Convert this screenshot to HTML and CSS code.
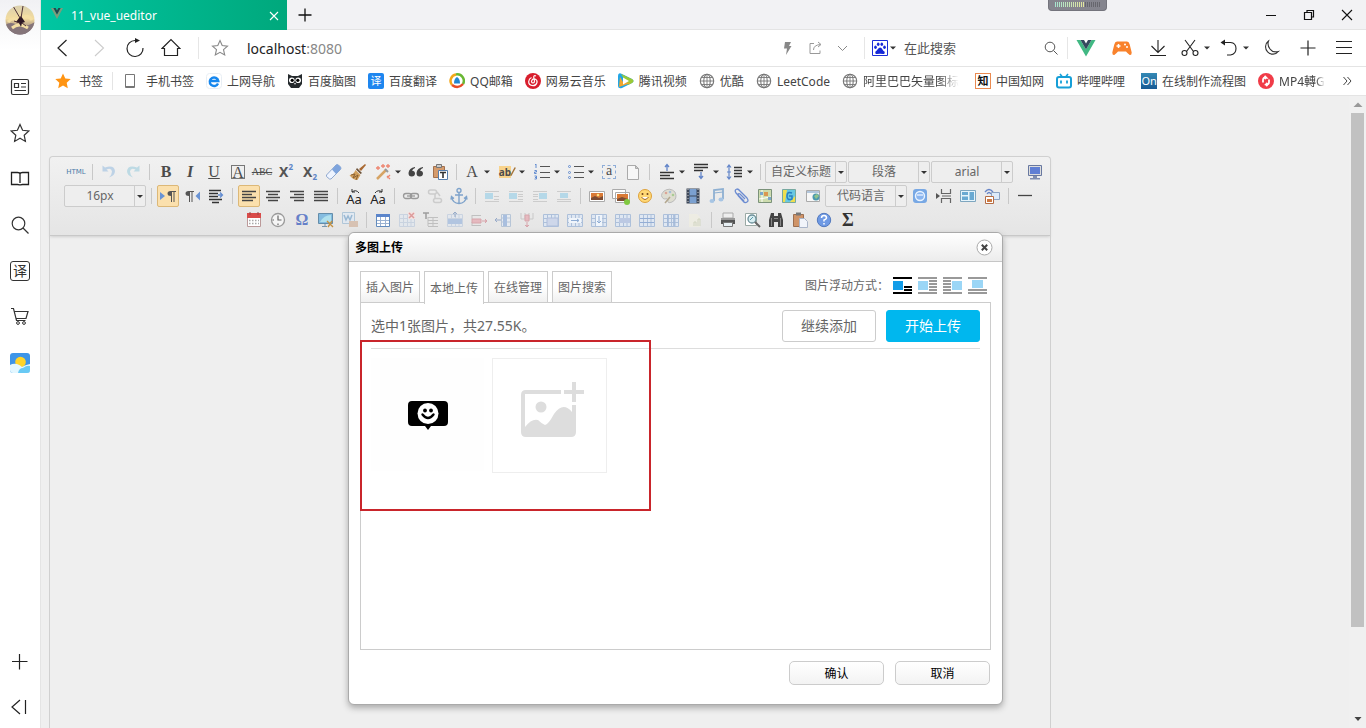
FILE: index.html
```html
<!DOCTYPE html>
<html lang="zh-CN">
<head>
<meta charset="utf-8">
<title>11_vue_ueditor</title>
<link rel="stylesheet" href="styles.css">
</head>
<body>
<svg class="defs" aria-hidden="true">
  <symbol id="caret" viewBox="0 0 6 4"><path d="M0 .5h6L3 3.500z" fill="currentColor"/></symbol>
  <symbol id="globe" viewBox="0 0 16 16"><g fill="none" stroke="#777" stroke-width="1.100"><circle cx="8" cy="8" r="6.700"/><ellipse cx="8" cy="8" rx="3.200" ry="6.700"/><path d="M1.300 8h13.400M8 1v14M2.500 4.500h11M2.500 11.500h11" stroke-width=".9"/></g></symbol>
  <symbol id="cells" viewBox="0 0 18 18"><path d="M1.500 3.500h15v12h-15z" fill="#dfe7f2"/><path d="M1.500 3.500h15v12h-15zM1.500 7.500h15M1.500 11.500h15M5.500 3.500v12M9.500 3.500v12M13 3.500v12" fill="none" stroke="#adc0da"/></symbol>
</svg>

<nav class="side" aria-label="侧边栏">
  <svg class="avatar" viewBox="0 0 30 30"><defs><clipPath id="av"><circle cx="15" cy="15" r="14.500"/></clipPath><linearGradient id="sky" x2="0" y2="1"><stop stop-color="#d9cfb0"/><stop offset=".45" stop-color="#f3dc9e"/><stop offset="1" stop-color="#66536a"/></linearGradient></defs><g clip-path="url(#av)"><path fill="url(#sky)" d="M0 0h30v30H0z"/><path d="M0 20q6-4 12 0t18-3v13H0z" fill="#85757a"/><path d="M3 17q5-6 11-1M17 13q6-4 10 2M7 23q7-6 16 0" stroke="#f4dfa4" stroke-width="3" fill="none"/><path d="M14 13l2-2 2 3 2 3-3 1-1 4-2-4-3-1z" fill="#2d1824"/><path d="M15 13L8 1m8 12 2-12M15 18l-6-2m8 2 4 3" stroke="#4c3038" fill="none"/></g></svg>
  <div class="side-list">
    <button aria-label="资讯"><svg viewBox="0 0 20 20"><g fill="none" stroke="#333" stroke-width="1.200"><rect x="1.500" y="2.500" width="17" height="15" rx="1.500"/><path d="M4.500 6.500h4v4h-4zM11 6.500h5M11 10h5M4.500 13.500H16"/></g></svg></button>
    <button aria-label="收藏"><svg viewBox="0 0 20 20"><path d="M10 1.500l2.600 5.800 6.200.7-4.600 4.200 1.200 6.200L10 15.300l-5.400 3.100 1.200-6.200L1.200 8l6.200-.7z" fill="none" stroke="#333" stroke-width="1.200"/></svg></button>
    <button aria-label="阅读"><svg viewBox="0 0 20 20"><path d="M1.500 3.500h6q2.500 0 2.500 1.500 0-1.500 2.500-1.500h6v12h-6q-2.500 0-2.500 1 0-1-2.500-1h-6zM10 5v9" fill="none" stroke="#222" stroke-width="1.300"/></svg></button>
    <button aria-label="搜索"><svg viewBox="0 0 20 20"><circle cx="8.500" cy="8.500" r="6.300" fill="none" stroke="#333" stroke-width="1.200"/><path d="M13 13l5.500 5.500" stroke="#333" stroke-width="1.200"/></svg></button>
    <button class="translate" aria-label="翻译"><span>译</span></button>
    <button aria-label="购物"><svg viewBox="0 0 20 20"><path d="M1 1.500h2.500l3 12h9M4.500 4.500H18l-2 7H6.500" fill="none" stroke="#333" stroke-width="1.200"/><circle cx="8" cy="16" r="1.400" fill="none" stroke="#333"/><circle cx="14" cy="16" r="1.400" fill="none" stroke="#333"/></svg></button>
    <button aria-label="天气"><svg viewBox="0 0 20 20"><rect width="20" height="20" rx="3" fill="#3d95e8"/><circle cx="10.500" cy="9" r="5.300" fill="#ffd429"/><path d="M0 12q3-2 7-1 3 1 5 3 3-2 8-3v6q0 3-3 3H3q-3 0-3-3z" fill="#e3f7ff"/><path d="M8 20q1-5 5-5 4-3 7-2v4q0 3-3 3z" fill="#68c9f4"/></svg></button>
  </div>
  <div class="side-end">
    <button aria-label="添加"><svg viewBox="0 0 20 20"><path d="M9.500 2v15.500M2 9.500h15.500" stroke="#222" stroke-width="1.200"/></svg></button>
    <button aria-label="收起"><svg viewBox="0 0 20 20"><path d="M10 4l-8 7 8 7M15.500 4v14" fill="none" stroke="#222" stroke-width="1.200"/></svg></button>
  </div>
</nav>

<div class="browser">
  <header class="tabstrip">
    <div class="tab"><svg class="tab-logo" viewBox="0 0 12 12"><path d="M0 0l6 11 6-11H9.600L6 6.500 2.400 0z" fill="#7d9c7c"/><path d="M2.400 0L6 6.500 9.600 0H7.400L6 2.500 4.600 0z" fill="#24434b"/></svg><span>11_vue_ueditor</span><button aria-label="关闭标签"><svg viewBox="0 0 10 10"><path d="M1 1l8 8M9 1L1 9" stroke="#fff" stroke-width="1.100"/></svg></button></div>
    <button class="new-tab" aria-label="新标签"><svg viewBox="0 0 14 14"><path d="M7 .5v13M.5 7h13" stroke="#111" stroke-width="1.300"/></svg></button>
    <div class="meter"><i></i></div>
    <div class="window-buttons">
      <button aria-label="最小化"><svg viewBox="0 0 12 12"><path d="M1 6.500h10" stroke="#111"/></svg></button>
      <button aria-label="还原"><svg viewBox="0 0 12 12"><path d="M1.500 3.500h7v7h-7zM4 3.500v-2h6.500V8h-2" fill="none" stroke="#111" stroke-width="1.200"/></svg></button>
      <button aria-label="关闭"><svg viewBox="0 0 12 12"><path d="M1 1l10 10M11 1L1 11" stroke="#111" stroke-width="1.100"/></svg></button>
    </div>
  </header>

  <div class="navbar">
    <button class="nav" aria-label="后退"><svg viewBox="0 0 20 20"><path d="M13.500 2L5 10l8.500 8" fill="none" stroke="#222" stroke-width="1.200"/></svg></button>
    <button class="nav" aria-label="前进"><svg viewBox="0 0 20 20"><path d="M6 2l8.500 8L6 18" fill="none" stroke="#ccc" stroke-width="1.100"/></svg></button>
    <button class="nav" aria-label="刷新"><svg viewBox="0 0 20 20"><path d="M11 2.500H10A8 8 0 1 0 18 10" fill="none" stroke="#222" stroke-width="1.200"/><path d="M10 0l5 2.500-5 2.500z" fill="#222"/></svg></button>
    <button class="nav" aria-label="主页"><svg viewBox="0 0 20 20"><path d="M1 10.500L10 1.500l9 9h-2.500v7h-13v-7z" fill="none" stroke="#222" stroke-width="1.200"/></svg></button>
    <i class="rule gap"></i>
    <button class="nav fav" aria-label="收藏此页"><svg viewBox="0 0 20 20"><path d="M10 2.500l2.200 5 5.300.6-4 3.600 1.200 5.300-4.700-2.700L5.300 17l1.200-5.300-4-3.600 5.300-.6z" fill="none" stroke="#888" stroke-width="1.100"/></svg></button>
    <div class="address" role="textbox" aria-label="地址" contenteditable="true">localhost<span>:8080</span></div>
    <button class="nav small" aria-label="极速"><svg viewBox="0 0 20 20"><path d="M8 4h6l-2 4h2.500L9 17l1-6.500H7z" fill="#888"/></svg></button>
    <button class="nav small" aria-label="分享"><svg viewBox="0 0 20 20"><path d="M9 5.500H5v10h10v-3M8.500 12q0-5 7-5.500M13 4l3 2.500-3 2.500" fill="none" stroke="#999"/></svg></button>
    <button class="nav small" aria-label="展开"><svg viewBox="0 0 20 20"><path d="M5 8l4.500 4.500L14 8" fill="none" stroke="#888"/></svg></button>
    <div class="search">
      <svg class="i16" viewBox="0 0 16 16"><path d="M.5.500h15v15H.5z" fill="#fff" stroke="#1c2ed8"/><g fill="#1528d8"><ellipse cx="3.500" cy="7.300" rx="1.300" ry="1.700"/><ellipse cx="6.200" cy="4.300" rx="1.300" ry="1.800"/><ellipse cx="9.800" cy="4.300" rx="1.300" ry="1.800"/><ellipse cx="12.500" cy="7.300" rx="1.300" ry="1.700"/><path d="M8 7.500q1.500 0 2.500 2t2 2q.8 2.500-1.500 2.600L8 13.800l-3 .3q-2.300-.1-1.500-2.600 1-.3 2-2T8 7.500z"/></g></svg>
      <svg class="caret" viewBox="0 0 6 4"><use href="#caret"/></svg>
      <input type="text" aria-label="搜索" placeholder="在此搜索">
      <button aria-label="搜索"><svg viewBox="0 0 14 14"><circle cx="6" cy="6" r="4.800" fill="none" stroke="#555"/><path d="M9.500 9.500L13.500 13.500" stroke="#555"/></svg></button>
    </div>
    <button class="nav" aria-label="Vue"><svg viewBox="0 0 20 20"><path d="M.5 2L10 18.500 19.500 2h-4L10 11.500 4.500 2z" fill="#41b883"/><path d="M4.500 2L10 11.500 15.500 2H12l-2 3.500L8 2z" fill="#34495e"/></svg></button>
    <button class="nav" aria-label="游戏"><svg viewBox="0 0 20 20"><path d="M5 3.500h10q2 0 2.700 3l2 8q0 3-2 2.500Q15.500 15 14 13.500H6Q4.500 15 2.300 17q-2 .5-2-2.500l2-8q.7-3 2.700-3z" fill="#f9822c"/><path d="M6.500 6v4M4.500 8h4" stroke="#fff" stroke-width="1.500"/><circle cx="13" cy="6.500" r="1" fill="#fff"/><circle cx="15" cy="9" r="1" fill="#fff"/></svg></button>
    <button class="nav" aria-label="下载"><svg viewBox="0 0 20 20"><path d="M10 2v12M3.500 8l6.500 6.500L16.500 8M2 17.500h16" fill="none" stroke="#222" stroke-width="1.100"/></svg></button>
    <button class="nav cut" aria-label="截图"><svg viewBox="0 0 20 20"><g fill="none" stroke="#222" stroke-width="1.100"><path d="M5 2l8.500 11.500M15 2L6.500 13.500"/><circle cx="4.500" cy="15" r="2.500"/><circle cx="15.500" cy="15" r="2.500"/></g></svg><svg class="caret" viewBox="0 0 6 4"><use href="#caret"/></svg></button>
    <button class="nav restore" aria-label="恢复"><svg viewBox="0 0 20 20"><path d="M3 4.500h8.500q5.500.5 5.500 6t-5.500 6.500H8" fill="none" stroke="#222" stroke-width="1.100"/><path d="M1.500 4.500L6 1.500v6z" fill="#222"/></svg><svg class="caret" viewBox="0 0 6 4"><use href="#caret"/></svg></button>
    <button class="nav" aria-label="夜间"><svg viewBox="0 0 20 20"><path d="M6.500 3a7.300 7.300 0 1 0 10 10.500Q11 15 8 11T6.500 3z" fill="none" stroke="#333" stroke-width="1.100"/></svg></button>
    <button class="nav" aria-label="更多工具"><svg viewBox="0 0 20 20"><path d="M10 2.500v15M2.500 10h15" stroke="#222" stroke-width="1.200"/></svg></button>
    <button class="nav" aria-label="菜单"><svg viewBox="0 0 20 20"><path d="M2 3.500h16M2 9.500h16M2 15.500h16" stroke="#222" stroke-width="1.100"/></svg></button>
  </div>

  <nav class="bookmarks" aria-label="书签">
    <a class="wide" href="#"><svg class="i16" viewBox="0 0 16 16"><path d="M8 .5l2.300 5 5.400.6-4 3.700 1.100 5.400L8 12.500l-4.800 2.700 1.100-5.400-4-3.700 5.400-.6z" fill="#ff9412"/></svg><span>书签</span></a>
    <a class="wide ruled" href="#"><svg class="i16" viewBox="0 0 16 16"><path d="M3.500 1.500h9v13h-9z" fill="#fff" stroke="#777"/><path d="M3.500 13.500h9" stroke="#777"/></svg><span>手机书签</span></a>
    <a href="#"><svg class="i16" viewBox="0 0 16 16"><rect x=".5" y=".5" width="15" height="15" rx="3" fill="#fff" stroke="#e8eef4"/><path d="M12 10.500A4.300 4.300 0 1 1 12.300 8H4.500" fill="none" stroke="#1687ee" stroke-width="2.400"/></svg><span>上网导航</span></a>
    <a href="#"><svg class="i16" viewBox="0 0 16 16"><path d="M1 1l4 2h6l4-2v10l-3 4H4l-3-4z" fill="#252a2d"/><circle cx="4.800" cy="7.300" r="2.800" fill="#fff"/><circle cx="11.200" cy="7.300" r="2.800" fill="#fff"/><circle cx="5.200" cy="7.300" r="1.600"/><circle cx="10.800" cy="7.300" r="1.600"/><path d="M7 10h2l-1 2z" fill="#ddd"/></svg><span>百度脑图</span></a>
    <a href="#"><b class="logo yi">译</b><span>百度翻译</span></a>
    <a href="#"><svg class="i16" viewBox="0 0 16 16"><g fill="none" stroke-width="2.500"><path d="M3 12A6.500 6.500 0 0 1 7 1.500" stroke="#f3a719"/><path d="M7 1.500A6.500 6.500 0 0 1 14 11" stroke="#69b733"/><path d="M14 11Q9 16.500 3 12" stroke="#e74c25"/></g><path d="M8 4q3 1.500 3 6.500H5Q5 5.500 8 4z" fill="#2186d0"/></svg><span>QQ邮箱</span></a>
    <a href="#"><svg class="i16" viewBox="0 0 16 16"><circle cx="8" cy="8" r="8" fill="#d81e2d"/><path d="M11 3q-2-1-2.300 1l.8 4q0 2-1.500 2-2-.2-1.300-2.300T10 6q2.500 1 2 3.500Q11 12.800 8 12.700 3.500 12.300 3.700 8.500 4 5.500 6.500 4.500" fill="none" stroke="#fff" stroke-width="1.200"/></svg><span>网易云音乐</span></a>
    <a href="#"><svg class="i16" viewBox="0 0 16 16"><path d="M0 3q0-4 4-2l10 5q3 2 0 4L4 15q-4 1-4-2z" fill="#21a6e7"/><path d="M3 1l11 5q3 2 0 4l-4 2z" fill="#9ac936"/><path d="M1 14l12-4-8-1-3-5z" fill="#f1a62c"/><path d="M5 4.500l6 3.500-6 3.500z" fill="#fff"/></svg><span>腾讯视频</span></a>
    <a href="#"><svg class="i16" viewBox="0 0 16 16"><use href="#globe"/></svg><span>优酷</span></a>
    <a href="#"><svg class="i16" viewBox="0 0 16 16"><use href="#globe"/></svg><span>LeetCode</span></a>
    <a class="roomy" href="#"><svg class="i16" viewBox="0 0 16 16"><use href="#globe"/></svg><span class="fade">阿里巴巴矢量图标</span></a>
    <a href="#"><b class="logo zhi">知</b><span>中国知网</span></a>
    <a class="roomy" href="#"><svg class="i16" viewBox="0 0 16 16"><path d="M4 1l2 2.500M12 1l-2 2.500" stroke="#169fd7" stroke-width="1.600"/><rect x="1" y="4" width="14" height="10.500" rx="2" fill="#fff" stroke="#169fd7" stroke-width="2"/><path d="M5 7.500v3M11 7.500v3" stroke="#169fd7" stroke-width="1.800"/></svg><span>哔哩哔哩</span></a>
    <a href="#"><b class="logo on">On</b><span>在线制作流程图</span></a>
    <a class="last" href="#"><svg class="i16" viewBox="0 0 16 16"><circle cx="8" cy="8" r="8" fill="#f03c48"/><path d="M5 9.500V7Q5 4 8 4.500L6.500 3M8 4.500L6.500 6M11 6.500V9q0 3-3 2.500L9.500 10M8 11.500L9.500 13" fill="none" stroke="#fff" stroke-width="1.800"/></svg><span class="fade">MP4轉G</span></a>
    <button class="more" aria-label="更多书签"><svg viewBox="0 0 10 10"><path d="M1.500 1l3.500 4-3.500 4M5.500 1L9 5 5.500 9" fill="none" stroke="#444"/></svg></button>
  </nav>

  <div class="viewport">
    <main class="page">
      <section class="editor">
        <div class="tools">
          <div class="row">
            <button class="t" aria-label="源代码"><span class="html">HTML</span></button><i class="sep"></i>
            <button class="t" aria-label="撤销"><svg viewBox="0 0 18 18"><path d="M2.500 2.500v6h6L6.500 6.500q5-2 5.500 2 0 3-3 6 6-2 6-6.500Q14 1.500 5 4.500z" fill="#bdd2e6"/></svg></button>
            <button class="t" aria-label="重做"><svg viewBox="0 0 18 18"><path d="M15.500 2.500v6h-6l2-2q-5-2-5.500 2 0 3 3 6-6-2-6-6.500Q4 1.500 13 4.500z" fill="#bddae4"/></svg></button><i class="sep"></i>
            <button class="t serif bold">B</button><button class="t serif italic">I</button><button class="t serif under">U</button>
            <button class="t serif"><span class="boxed">A</span></button><button class="t serif strike">ABC</button>
            <button class="t script">X<sup>2</sup></button><button class="t script">X<sub>2</sub></button>
            <button class="t" aria-label="清除格式"><svg viewBox="0 0 18 18"><path d="M1.500 12L11 2q1-1 2.500 0l2 2q1 1 0 2.500L6 16H4.500l-3-2.500z" fill="#eef4ff" stroke="#8fa8cf"/><path d="M7 6.500L11 2q1-1 2.500 0l2 2q1 1 0 2.500L11 11z" fill="#7ea4dd"/></svg></button>
            <button class="t" aria-label="格式刷"><svg viewBox="0 0 18 18"><path d="M16 1l1 1-5 6-2-2z" fill="#a96932"/><path d="M8 5l5 5-1.500 1L7 6.500z" fill="#6c5239"/><path d="M6.500 7l5 5-3 5q-5 0-8-5 4 0 6-5z" fill="#d1a15e"/><path d="M2 12l4-1-2 4 5-3-2 5" stroke="#8a6030" fill="none"/></svg></button>
            <button class="t split" aria-label="自动排版"><svg viewBox="0 0 18 18"><path d="M3 16L12 7" stroke="#d6a465" stroke-width="2.500"/><path d="M11 6l3 3" stroke="#999" stroke-width="2"/><path d="M4 3v4M2 5h4M9 1v4M7 3h4M14 1v4M12 3h4M13 13l3 3M16 12l-3 3" stroke="#ee8570" stroke-width="1.300"/></svg><svg class="caret" viewBox="0 0 6 4"><use href="#caret"/></svg></button>
            <button class="t" aria-label="引用"><svg viewBox="0 0 18 18"><path d="M8 4Q2 5 1.500 10q0 3.500 3.200 3.500T8 10.500Q8 8 5 7.500 6 5.500 8 5zM16 4q-6 1-6.500 6 0 3.500 3.200 3.500t3.300-3q0-2.500-3-3 1-2 3-2.500z" fill="#444"/></svg></button>
            <button class="t" aria-label="纯文本粘贴"><svg viewBox="0 0 18 18"><path d="M2.500 3.500h11v11h-11z" fill="#d59b6c" stroke="#a2714e"/><path d="M5.500 1.500h5v3h-5z" fill="#ccc" stroke="#777"/><path d="M7.500 7.500h9v9h-9z" fill="#fff" stroke="#557dac"/><path d="M9 9.500h6M12 9v6" stroke="#333" stroke-width="1.600"/></svg></button><i class="sep"></i>
            <button class="t split serif">A<svg class="caret" viewBox="0 0 6 4"><use href="#caret"/></svg></button>
            <button class="t split" aria-label="背景色"><span class="marker">ab</span><svg class="pen" viewBox="0 0 8 14"><path d="M7 1L1 12" stroke="#a67436" stroke-width="2"/></svg><svg class="caret" viewBox="0 0 6 4"><use href="#caret"/></svg></button>
            <button class="t split" aria-label="有序列表"><svg viewBox="0 0 18 18"><path d="M7 3.500h10M7 9.500h10M7 14.500h10" stroke="#555"/><path d="M2 2l1-1v4M1.500 7.500h2v1.500h-2v1.500h2M1.500 13h2v3h-2M2 14.500h1.500" fill="none" stroke="#638cd0"/></svg><svg class="caret" viewBox="0 0 6 4"><use href="#caret"/></svg></button>
            <button class="t split" aria-label="无序列表"><svg viewBox="0 0 18 18"><path d="M7 3.500h10M7 9.500h10M7 14.500h10" stroke="#555"/><g fill="none" stroke="#638cd0"><circle cx="2.500" cy="3.500" r="1"/><circle cx="2.500" cy="9.500" r="1"/><circle cx="2.500" cy="14.500" r="1"/></g></svg><svg class="caret" viewBox="0 0 6 4"><use href="#caret"/></svg></button>
            <button class="t serif"><span class="dotted">a</span></button>
            <button class="t" aria-label="清空文档"><svg viewBox="0 0 18 18"><path d="M3.500 2.500h8l3 3v11h-11z" fill="#f7f7f7" stroke="#aaa"/><path d="M11.500 2.500v3h3z" fill="#ccc" stroke="#aaa"/></svg></button><i class="sep"></i>
            <button class="t split" aria-label="段前距"><svg viewBox="0 0 18 18"><path d="M2 9.500h14M2 12.500h10M2 15.500h14" stroke="#333" stroke-width="1.400"/><path d="M9 8V2M7 4l2-2.500L11 4" fill="none" stroke="#6285c9" stroke-width="1.300"/></svg><svg class="caret" viewBox="0 0 6 4"><use href="#caret"/></svg></button>
            <button class="t split" aria-label="段后距"><svg viewBox="0 0 18 18"><path d="M2 1.500h14M2 4.500h14M2 7.500h9" stroke="#333" stroke-width="1.400"/><path d="M9 9v6M7 13l2 2.500 2-2.500" fill="none" stroke="#6285c9" stroke-width="1.300"/></svg><svg class="caret" viewBox="0 0 6 4"><use href="#caret"/></svg></button>
            <button class="t split" aria-label="行间距"><svg viewBox="0 0 18 18"><path d="M8 4.500h8M8 7.500h8M8 10.500h8M8 13.500h8" stroke="#333" stroke-width="1.400"/><path d="M3 2v14M1 4.500L3 2l2 2.500M1 13.500L3 16l2-2.500M1 9h4" fill="none" stroke="#6285c9" stroke-width="1.200"/></svg><svg class="caret" viewBox="0 0 6 4"><use href="#caret"/></svg></button><i class="sep"></i>
            <span class="combo"><select aria-label="自定义标题"><option>自定义标题</option></select></span><span class="combo"><select aria-label="段落格式"><option>段落</option></select></span><span class="combo"><select aria-label="字体"><option>arial</option></select></span><i class="sep none"></i>
            <button class="t" aria-label="全屏"><svg viewBox="0 0 18 18"><path d="M2.500 2.500h13v10h-13z" fill="#ddd" stroke="#6878a0"/><path d="M4 4h10v7H4z" fill="#607fd4"/><path d="M7 13h4v2h3v1.500H4V15h3z" fill="#7f8db0"/></svg></button>
          </div>
          <div class="row">
            <span class="combo"><select aria-label="字号"><option>16px</option></select></span><i class="sep"></i>
            <button class="t active" aria-label="从左向右"><svg viewBox="0 0 18 18"><path d="M1 5l5 4-5 4z" fill="#6993d4"/><path d="M17 4h-5.500q-3 0-3 2.500t3.500 2.500v6h1V5h1.500v10h1V5H17z" fill="#555"/></svg></button>
            <button class="t" aria-label="从右向左"><svg viewBox="0 0 18 18"><path d="M17 4.500L12.500 9l4.500 4.500z" fill="#6993d4"/><path d="M11 4H5.500q-3 0-3 2.500T6 9v6h1V5h1.500v10h1V5H11z" fill="#555"/></svg></button>
            <button class="t" aria-label="缩进"><svg viewBox="0 0 18 18"><path d="M2 3.500h12M2 6.500h9M2 9.500h9M2 12.500h13M5 15.500h7" stroke="#333" stroke-width="1.300"/><path d="M11 8h4M13 5.500L15.500 8 13 10.500" fill="none" stroke="#638cd0" stroke-width="1.300"/></svg></button><i class="sep"></i>
            <button class="t active" aria-label="左对齐"><svg viewBox="0 0 18 18"><path d="M2 4.500h14M2 7.500h10M2 10.500h14M2 13.500h11" stroke="#444" stroke-width="1.300"/></svg></button>
            <button class="t" aria-label="居中"><svg viewBox="0 0 18 18"><path d="M2 4.500h14M4 7.500h10M2 10.500h14M4 13.500h10" stroke="#444" stroke-width="1.300"/></svg></button>
            <button class="t" aria-label="右对齐"><svg viewBox="0 0 18 18"><path d="M2 4.500h14M6 7.500h10M2 10.500h14M6 13.500h10" stroke="#444" stroke-width="1.300"/></svg></button>
            <button class="t" aria-label="两端对齐"><svg viewBox="0 0 18 18"><path d="M2 4.500h14M2 7.500h14M2 10.500h14M2 13.500h14" stroke="#444" stroke-width="1.300"/></svg></button><i class="sep"></i>
            <button class="t case"><svg viewBox="0 0 14 5"><path d="M12 4Q9 0 5 3M5 0v3h3" fill="none" stroke="#333"/></svg>Aa</button>
            <button class="t case"><svg viewBox="0 0 14 5"><path d="M4 4q3-4 7-1M11 0v3H8" fill="none" stroke="#333"/></svg>Aa</button><i class="sep"></i>
            <button class="t" aria-label="链接"><svg viewBox="0 0 18 18"><g fill="none" stroke="#999" stroke-width="1.300"><rect x="1.500" y="6.500" width="8" height="5" rx="2.500"/><rect x="8.500" y="6.500" width="8" height="5" rx="2.500"/><path d="M5 9h8"/></g></svg></button>
            <button class="t" aria-label="取消链接"><svg viewBox="0 0 18 18"><g fill="none" stroke="#ccc" stroke-width="1.500"><rect x="2.500" y="3" width="8" height="4" rx="2"/><rect x="7.500" y="11.500" width="8" height="4" rx="2"/><path d="M9 7v4M11 5l3 4"/></g></svg></button>
            <button class="t" aria-label="锚点"><svg viewBox="0 0 18 18"><g fill="none" stroke="#7fa3cb" stroke-width="1.400"><circle cx="9" cy="3.500" r="2"/><path d="M9 5.500v11M5 8h8M1.500 10q1 6 7.500 6.500 6.500-.5 7.500-6.500M1 12.500l.5-3 2.500 2M17 12.500l-.5-3-2.500 2"/></g></svg></button><i class="sep"></i>
            <button class="t" aria-label="默认浮动"><svg viewBox="0 0 18 18"><path d="M2 4.500h14M11 12.500h5M11 9.500h5M2 14.500h14" stroke="#ccc"/><path d="M2 6h8v6H2z" fill="#b5d8e8"/></svg></button>
            <button class="t" aria-label="左浮动"><svg viewBox="0 0 18 18"><path d="M2 4.500h14M11 7.500h5M11 9.500h5M11 12.500h5M2 14.500h14" stroke="#ccc"/><path d="M2 6h8v6H2z" fill="#b5d8e8"/></svg></button>
            <button class="t" aria-label="右浮动"><svg viewBox="0 0 18 18"><path d="M2 4.500h14M2 7.500h5M2 9.500h5M2 12.500h5M2 14.500h14" stroke="#ccc"/><path d="M8 6h8v6H8z" fill="#b5d8e8"/></svg></button>
            <button class="t" aria-label="居中浮动"><svg viewBox="0 0 18 18"><path d="M2 4.500h14M2 12.500h14M2 14.500h14" stroke="#ccc"/><path d="M5 6h8v5H5z" fill="#b5d8e8"/></svg></button><i class="sep"></i>
            <button class="t" aria-label="单图上传"><svg viewBox="0 0 18 18"><path d="M1.500 4.500h15v10h-15z" fill="#fff" stroke="#aaa"/><path d="M3 6h12v7H3z" fill="#d97a36"/><path d="M3 13v-2l4-2 4 2 4-2v4z" fill="#7b4c33"/><circle cx="10" cy="8" r="1.300" fill="#ffe282"/></svg></button>
            <button class="t" aria-label="多图上传"><svg viewBox="0 0 18 18"><path d="M.5 2.500h13v9H.5zM3.500 5.500h14v10h-14z" fill="#fff" stroke="#aaa"/><path d="M5 7h11v7H5z" fill="#d97a36"/><path d="M5 14v-2l5-2 6 2v2z" fill="#7b4c33"/><circle cx="15" cy="15" r="3" fill="#80c840"/></svg></button>
            <button class="t" aria-label="表情"><svg viewBox="0 0 18 18"><circle cx="9" cy="9" r="6.500" fill="#ffd875" stroke="#dda13b"/><path d="M5.500 10q3.500 5 7 0" fill="#fff" stroke="#9b6220"/><circle cx="6.500" cy="7" r="1" fill="#70451b"/><circle cx="11.500" cy="7" r="1" fill="#70451b"/></svg></button>
            <button class="t" aria-label="涂鸦"><svg viewBox="0 0 18 18"><path d="M4 4q6-4 11 1 3 7-3 10-5 2-4-2 0-2-4-1-5-3 0-8z" fill="#deddd1" stroke="#bbb"/><circle cx="6" cy="6" r="1.300" fill="#dca697"/><circle cx="10" cy="5" r="1.300" fill="#a6bed7"/><circle cx="13" cy="8" r="1.300" fill="#a9cc94"/><path d="M5 16l5-6" stroke="#b3a78e" stroke-width="1.500"/></svg></button>
            <button class="t" aria-label="视频"><svg viewBox="0 0 18 18"><path d="M2.500 1.500h13v15h-13z" fill="#3e4859"/><path d="M5.500 2h7v6.500h-7zM5.500 9.500h7V16h-7z" fill="#7ba0cf"/><path d="M4 2v14M14 2v14" stroke="#ccc" stroke-dasharray="1 2"/></svg></button>
            <button class="t" aria-label="音乐"><svg viewBox="0 0 18 18"><path d="M6 14V3l9-1v10" fill="none" stroke="#8eb0d2" stroke-width="1.800"/><path d="M6 6l9-1" stroke="#8eb0d2"/><ellipse cx="4" cy="14" rx="2.500" ry="2" fill="#a7c5e4"/><ellipse cx="13" cy="12.500" rx="2.500" ry="2" fill="#a7c5e4"/></svg></button>
            <button class="t" aria-label="附件"><svg viewBox="0 0 18 18"><path d="M12 14L4 6q-2-3 1-4 1.500 0 3 2l7 7q2 3 0 4-2 1.500-4-1L6 8.500Q6 6 8 7l5 5" fill="none" stroke="#6b8bd1" stroke-width="1.300"/></svg></button>
            <button class="t" aria-label="地图"><svg viewBox="0 0 18 18"><path d="M2.500 2.500h13v13h-13z" fill="#cddcae" stroke="#7b927a"/><path d="M3 12l12-2M6 3v12" stroke="#fff"/><path d="M8 5h4v4H8z" fill="#da9851"/><path d="M4 5h3v3H4zM12 10h3v3h-3z" fill="#7ba6ca"/></svg></button>
            <button class="t" aria-label="Google地图"><svg viewBox="0 0 18 18"><path d="M2.500 2.500h13v13h-13z" fill="#68c8e2" stroke="#77a9a0"/><path d="M3 3h4L5 15H3zM10 15l5-6v6z" fill="#f0df4e"/><path d="M12 6q-5-2-5 3t5 3V9h-3" fill="none" stroke="#277fc2" stroke-width="1.500"/></svg></button>
            <button class="t" aria-label="插入框架"><svg viewBox="0 0 18 18"><path d="M2.500 3.500h13v11h-13z" fill="#f7f7f7" stroke="#aaa"/><path d="M3 4h12v2H3z" fill="#b2c6dc"/><circle cx="12" cy="10" r="3.500" fill="#4c99af"/><path d="M10 9l3-2 2 2-3 3z" fill="#8fc38b"/></svg></button>
            <span class="combo"><select aria-label="代码语言"><option>代码语言</option></select></span>
            <button class="t" aria-label="应用"><svg viewBox="0 0 18 18"><rect x="2" y="2" width="14" height="14" rx="3" fill="#78a8e4"/><circle cx="9" cy="9" r="4.500" fill="#8ab5ef" stroke="#eaf4ff" stroke-width="1.400"/><path d="M6 8h6" stroke="#dcebff" stroke-width="1.500"/></svg></button>
            <button class="t" aria-label="分页"><svg viewBox="0 0 18 18"><path d="M6.500 2v4.500h9V2M6.500 16v-4.500h9V16M7 9h9" fill="none" stroke="#666" stroke-width="1.200"/><path d="M1 6l4 3-4 3z" fill="#555"/></svg></button>
            <button class="t" aria-label="模板"><svg viewBox="0 0 18 18"><path d="M1.500 3.500h15v11h-15z" fill="#e6f4fb" stroke="#7ea6bf"/><path d="M3 5h6v3H3zM3 9.500h6V13H3zM10.500 5H15v8h-4.500z" fill="#69a9d2"/></svg></button>
            <button class="t" aria-label="涂图"><svg viewBox="0 0 18 18"><path d="M2 5q4-5 8 0M4 7q2-3 4 0" fill="none" stroke="#6684c7" stroke-width="1.300"/><path d="M8.500 5.500h8v7h-8z" fill="#dceafa" stroke="#8ca3c2"/><path d="M2.500 9.500h8v7h-8z" fill="#fff" stroke="#b56d46"/><path d="M4 12h5v3H4z" fill="#ce7a42"/></svg></button><i class="sep"></i>
            <button class="t" aria-label="分隔线"><svg viewBox="0 0 18 18"><path d="M2 8.500h14" stroke="#444" stroke-width="1.300"/></svg></button>
          </div>
          <div class="row center">
            <button class="t" aria-label="日期"><svg viewBox="0 0 18 18"><path d="M2.500 2.500h13v13h-13z" fill="#fff" stroke="#b99"/><path d="M2 2h14v5H2z" fill="#d94b49"/><path d="M5 1v3M13 1v3" stroke="#944"/><path d="M4 9.500h10M4 12.500h10" stroke="#a8a8a8" stroke-width="1.500" stroke-dasharray="1.500 1.500"/></svg></button>
            <button class="t" aria-label="时间"><svg viewBox="0 0 18 18"><circle cx="9" cy="9" r="6.500" fill="#f5f5f5" stroke="#999" stroke-width="1.300"/><path d="M9 4.500V9h3.500M3.500 9H5M9 14v-1.500" fill="none" stroke="#666" stroke-width="1.200"/></svg></button>
            <button class="t omega">Ω</button>
            <button class="t" aria-label="截屏"><svg viewBox="0 0 18 18"><path d="M1.500 2.500h14v10h-14z" fill="#84bce0" stroke="#648daa"/><path d="M3 11q4-7 11-7v7z" fill="#afe0ed"/><path d="M5 15.500h5M8 13v2" stroke="#7796af"/><path d="M10 10l6 6M15 10l-4 6" stroke="#c49142" stroke-width="1.400"/></svg></button>
            <button class="t faded" aria-label="Word图片"><svg viewBox="0 0 18 18"><path d="M1.500 1.500h12v11h-12z" fill="#dceafa" stroke="#7aa7ca"/><path d="M3 4l2 5 2-4 2 4 2-5" fill="none" stroke="#4d8bc1" stroke-width="1.500"/><path d="M8 10h9v6H8z" fill="#c99e80"/></svg></button><i class="sep"></i>
            <button class="t" aria-label="表格"><svg viewBox="0 0 18 18"><path d="M2.500 3.500h13v12h-13z" fill="#fff" stroke="#628bbd"/><path d="M2 3h14v3H2z" fill="#5b85cb"/><path d="M3 9.500h12M3 12.500h12M6.500 6v9M11.500 6v9" stroke="#9bb2d2"/></svg></button>
            <button class="t faded" aria-label="删除表格"><svg viewBox="0 0 18 18"><use href="#cells"/><path d="M10 1h7v7h-7z" fill="#fbdedb"/><path d="M11 2l5 5M16 2l-5 5" stroke="#d44e4e" stroke-width="1.500"/></svg></button>
            <button class="t faded" aria-label="表格标题"><svg viewBox="0 0 18 18"><path d="M1 2h6M4 2v6" stroke="#555" stroke-width="1.500"/><path d="M6 6.500h10M6 9.500h10M6 12.500h10M6 15.500h10M6 6v9M11 6v9" stroke="#999"/></svg></button>
            <button class="t faded" aria-label="前插行"><svg viewBox="0 0 18 18"><use href="#cells"/><path d="M2 8h14v5H2z" fill="#7ea4da"/><path d="M9 6V1M7 3l2-2 2 2" fill="none" stroke="#456eaa"/></svg></button>
            <button class="t faded" aria-label="删除行"><svg viewBox="0 0 18 18"><path d="M2 4.500h9M2 14.500h9M2 4v4M2 11v4" stroke="#999"/><path d="M2 8h9v4H2zM12 10h5M15 8l2 2-2 2" fill="#e58d99" stroke="#c76673"/></svg></button>
            <button class="t faded" aria-label="前插列"><svg viewBox="0 0 18 18"><path d="M7.500 3.500h9v12h-9zM7.500 7h9M7.500 11h9" fill="#e6eefb" stroke="#88a5c8"/><path d="M9 4h4v11H9z" fill="#6c98d8"/><path d="M7 9H1M3 7L1 9l2 2" fill="none" stroke="#496eaa"/></svg></button>
            <button class="t faded" aria-label="删除列"><svg viewBox="0 0 18 18"><path d="M3 2v6h4V2M11 2v6h4V2" fill="none" stroke="#aaa"/><path d="M7 4h4v6H7zM9 11v5M7 14l2 2 2-2" fill="#e58d99" stroke="#c76673"/></svg></button>
            <button class="t" aria-label="合并单元格"><svg viewBox="0 0 18 18"><use href="#cells"/><path d="M5 7h11v8H5z" fill="#ced7ea" stroke="#afbedb"/></svg></button>
            <button class="t" aria-label="右合并"><svg viewBox="0 0 18 18"><use href="#cells"/><path d="M3 7h12v5H3z" fill="#f0f5fb"/><path d="M5 9.500h8M11 8l2 1.500-2 1.500" stroke="#8eacd4" fill="none"/></svg></button>
            <button class="t" aria-label="下合并"><svg viewBox="0 0 18 18"><use href="#cells"/><path d="M6 4h6v11H6z" fill="#f0f5fb"/><path d="M9 5v7M7 10l2 2 2-2" stroke="#8eacd4" fill="none"/></svg></button>
            <button class="t" aria-label="拆分单元格"><svg viewBox="0 0 18 18"><use href="#cells"/><path d="M5 7h11v5H5z" fill="#bcc9e3"/></svg></button>
            <button class="t" aria-label="拆分行"><svg viewBox="0 0 18 18"><use href="#cells"/><path d="M2 7.500h14M2 11.500h14" stroke="#94aed5"/></svg></button>
            <button class="t" aria-label="拆分列"><svg viewBox="0 0 18 18"><use href="#cells"/><path d="M6 4v11M12 4v11" stroke="#a0b6d8" stroke-width="1.500"/></svg></button>
            <button class="t faded" aria-label="图表"><svg viewBox="0 0 18 18"><path d="M3 3h8l3 3v10H3z" fill="#f3f1df"/><path d="M8 15v-4h2v4M12 15V8h2v7" stroke="#bdc59d" fill="none"/></svg></button><i class="sep"></i>
            <button class="t" aria-label="打印"><svg viewBox="0 0 18 18"><path d="M4 2h10v5H4z" fill="#eee" stroke="#aaa"/><path d="M2 7h14v6H2z" fill="#555"/><path d="M2 7h14v2H2z" fill="#999"/><path d="M4.500 11.500h9v4h-9z" fill="#e8f0f4" stroke="#777"/></svg></button>
            <button class="t" aria-label="预览"><svg viewBox="0 0 18 18"><path d="M2.500 2.500h11v12h-11z" fill="#fff" stroke="#9aa9a4"/><circle cx="9" cy="8" r="4" fill="#d9eef2" stroke="#6b8f98" stroke-width="1.300"/><path d="M7 9l3-3" stroke="#5b9baa"/><path d="M12 11l5 5" stroke="#666" stroke-width="2"/></svg></button>
            <button class="t" aria-label="查找替换"><svg viewBox="0 0 18 18"><path d="M4 2h3v3h4V2h3l2 7v7h-5v-5H7v5H2V9z" fill="#444"/><path d="M4.500 7v8M13.500 7v8M7 7.500h4" stroke="#888"/></svg></button>
            <button class="t" aria-label="粘贴"><svg viewBox="0 0 18 18"><path d="M2.500 3.500h10v12h-10z" fill="#cf9468" stroke="#9b6e50"/><path d="M5 1.500h5v3H5z" fill="#777"/><path d="M8.500 7.500h5l3 3v6h-8z" fill="#f1f4fa" stroke="#aab5c9"/></svg></button>
            <button class="t" aria-label="帮助"><svg viewBox="0 0 18 18"><circle cx="9" cy="9" r="6.700" fill="#6f9ae4" stroke="#5379bd"/><path d="M6.500 7q0-2.500 2.500-2.500T11.500 7Q11 8.500 9 9v1.500M9 12v1.500" fill="none" stroke="#fff" stroke-width="1.500"/></svg></button>
            <button class="t sigma">Σ</button>
          </div>
        </div>
        <div class="canvas"></div>
      </section>

      <section class="dialog" role="dialog" aria-labelledby="dlg-title">
        <header class="dialog-head"><h1 id="dlg-title">多图上传</h1><button aria-label="关闭对话框"><svg viewBox="0 0 17 17"><circle cx="8.500" cy="8.500" r="7.500" fill="#fff" stroke="#aaa"/><path d="M5.800 5.800l5.400 5.400M11.200 5.800l-5.400 5.400" stroke="#444" stroke-width="2"/></svg></button></header>
        <div class="dialog-body">
          <div class="tabs">
            <button>插入图片</button><button class="on">本地上传</button><button>在线管理</button><button>图片搜索</button>
            <div class="float">
              <span>图片浮动方式：</span>
              <button aria-label="默认"><svg viewBox="0 0 19 17"><path d="M0 1h19M11 10h8M11 13h8M0 16h19" stroke="#000" stroke-width="2"/><path d="M0 4h10v9H0z" fill="#129ce8"/></svg></button>
              <button aria-label="左"><svg viewBox="0 0 19 17"><path d="M0 1h19M11 4h8M11 7h8M11 10h8M11 13h8M0 16h19" stroke="#999" stroke-width="1.800"/><path d="M0 4h10v9H0z" fill="#9bd6f6"/></svg></button>
              <button aria-label="右"><svg viewBox="0 0 19 17"><path d="M0 1h19M0 4h8M0 7h8M0 10h8M0 13h8M0 16h19" stroke="#999" stroke-width="1.800"/><path d="M9 4h10v9H9z" fill="#9bd6f6"/></svg></button>
              <button aria-label="中"><svg viewBox="0 0 19 17"><path d="M0 1h19M0 13h19M0 16h19" stroke="#999" stroke-width="1.800"/><path d="M4 3h11v8H4z" fill="#9bd6f6"/></svg></button>
            </div>
          </div>
          <div class="panel">
            <div class="status"><p>选中1张图片，共27.55K。</p><button class="add">继续添加</button><button class="start">开始上传</button></div>
            <div class="files">
              <div class="file"><svg viewBox="0 0 40 30"><path d="M4 1h32q4 0 4 4v17q0 4-4 4H23l-3 4-3-4H4q-4 0-4-4V5q0-4 4-4z"/><circle cx="20" cy="13.500" r="10.500" fill="#fff"/><circle cx="17" cy="10.500" r="1.900"/><circle cx="23" cy="10.500" r="1.900"/><path d="M14.500 14.500q5.500 7 11 0" fill="none" stroke="#000" stroke-width="2.400" stroke-linecap="round"/></svg></div>
              <button class="drop" aria-label="添加图片"><svg viewBox="0 0 64 56"><path d="M40 8H5Q0 8 0 13v37q0 5 5 5h45q5 0 5-5V23h-4v7q-9-11-18 2-6 11-9 11-3-1-7-5-6-2-13 7V12h36z" fill="#ddd"/><circle cx="20" cy="25" r="5.500" fill="#ddd"/><path d="M53 0v20M43 10h20" stroke="#ddd" stroke-width="4"/></svg></button>
            </div>
            <div class="highlight"></div>
          </div>
          <footer class="actions"><button>确认</button><button>取消</button></footer>
        </div>
      </section>
    </main>
    <div class="scrollbar" aria-hidden="true"><svg viewBox="0 0 17 17"><path d="M4.500 11h9L9 6.500z" fill="#999"/></svg><div class="track"><i></i></div><svg viewBox="0 0 17 17"><path d="M5.500 6h7L9 10z" fill="#444"/></svg></div>
  </div>
</div>
</body>
</html>
```

FILE: styles.css
```css
* { box-sizing: border-box; }
body {
  margin: 0; height: 100vh; display: flex; overflow: hidden; background: #fff; color: #333;
  font: 12px/16px "Noto Sans", "Noto Sans CJK SC", sans-serif;
}
button, input, select { font: inherit; color: inherit; }
button { padding: 0; border: 0; background: none; }
svg { display: block; flex: none; }
.defs { position: absolute; width: 0; height: 0; }
.i16 { width: 16px; height: 16px; }
.caret { width: 6px; height: 4px; color: #333; }

/* sidebar */
.side {
  flex: none; width: 41px; display: flex; flex-direction: column; align-items: center;
  border-right: 1px solid #e4e4e4; background: linear-gradient(#f1f1f4, #fff 50px);
}
.avatar { width: 30px; height: 30px; margin-top: 5px; }
.side-list { margin-top: 29px; }
.side button { display: flex; width: 40px; height: 46px; align-items: center; justify-content: center; }
.side button svg { width: 20px; height: 20px; }
.side-end { margin-top: auto; }
.side .side-end button { height: 44px; }
.translate span { width: 20px; height: 20px; border: 1px solid #333; border-radius: 3px; font-size: 14px; line-height: 17px; text-align: center; }

/* browser chrome */
.browser { flex: 1; min-width: 0; display: flex; flex-direction: column; }
.tabstrip { flex: none; display: flex; height: 30px; background: #f2f2f4; border-bottom: 1px solid #e4e4e4; }
.tab {
  display: flex; align-items: center; width: 246px; height: 30px; padding: 2px 8px 0 10px;
  background: linear-gradient(90deg, #00c6a2, #00a87c); color: #fff;
}
.tab-logo { width: 12px; height: 12px; margin: 0 8px 4px 0; }
.tab span { flex: 1; }
.tab button svg { width: 10px; height: 10px; }
.new-tab { width: 36px; display: flex; align-items: center; justify-content: center; }
.new-tab svg { width: 14px; height: 14px; }
.meter { width: 59px; height: 11px; margin: 0 145px 0 auto; padding: 2px 6px 0; background: #85858e; border: 1px solid #74747c; border-top: 0; border-radius: 0 0 4px 4px; }
.meter i { display: block; height: 5px; background: repeating-linear-gradient(90deg, transparent 0 1px, #85858e 1px 2px), linear-gradient(90deg, #a5e5d0, #e5e69b 65%, #66666d 66%); }
.window-buttons { display: flex; }
.window-buttons button { display: flex; width: 38px; align-items: center; justify-content: center; }
.window-buttons svg { width: 12px; height: 12px; }

.navbar { flex: none; display: flex; align-items: center; height: 37px; padding: 0 4px; border-bottom: 1px solid #e4e4e4; }
.nav { flex: none; display: flex; width: 36px; height: 36px; align-items: center; justify-content: center; }
.nav svg:first-child { width: 20px; height: 20px; }
.nav.small { width: 28px; }
.nav.cut { width: 38px; gap: 4px; }
.nav.restore { width: 40px; gap: 4px; }
.rule { width: 1px; height: 22px; background: #e6e6e6; }
.rule.gap { margin: 0 3px 0 9px; }
.address { flex: 1; min-width: 0; margin-left: 9px; padding-top: 1px; font-size: 14px; line-height: 20px; color: #222; white-space: nowrap; }
.address span { color: #888; }
.search { display: flex; align-items: center; width: 204px; height: 22px; margin-left: 7px; padding: 0 9px 0 7px; border: 1px solid #e6e6e6; border-width: 0 1px; }
.search .caret { margin: 0 8px 0 2px; }
.search input { flex: 1; min-width: 0; padding: 0; border: 0; outline: 0; background: none; font-size: 13px; }
.search input::placeholder { color: #555; opacity: 1; }
.search button svg { width: 14px; height: 14px; }

.bookmarks { flex: none; display: flex; align-items: center; gap: 12px; height: 29px; padding: 0 14px; border-bottom: 1px solid #e4e4e4; white-space: nowrap; overflow: hidden; }
.bookmarks a { flex: none; display: flex; align-items: center; gap: 5px; color: #444; text-decoration: none; }
.bookmarks a span { padding-top: 2px; }
.bookmarks .wide { gap: 8px; }
.bookmarks .ruled { margin-left: -3px; padding-left: 9px; border-left: 1px solid #e4e4e4; }
.bookmarks .roomy { margin-right: 4px; }
.bookmarks .last { flex: 0 1 auto; min-width: 0; overflow: hidden; }
.fade { -webkit-mask-image: linear-gradient(90deg, #000 80%, transparent); mask-image: linear-gradient(90deg, #000 80%, transparent); }
.more { margin-left: auto; }
.more svg { width: 10px; height: 10px; }
.logo { display: block; width: 16px; height: 16px; font-size: 11px; line-height: 15px; text-align: center; border-radius: 2px; color: #fff; font-weight: 400; }
.yi { background: #1e86ef; }
.zhi { border: 1px solid #ea8a50; border-radius: 0; color: #111; line-height: 13px; font-weight: 700; background: #fff; }
.on { background: linear-gradient(#3489b5, #185a93); border-radius: 0; }

/* page */
.viewport { flex: 1; min-height: 0; display: flex; background: #efefef; }
.page { position: relative; flex: 1; min-width: 0; display: flex; padding: 60px 8px 0; }
.scrollbar { flex: none; width: 17px; display: flex; flex-direction: column; background: #f0f0f0; }
.scrollbar svg { width: 17px; height: 17px; }
.track { flex: 1; padding: 0 2px; }
.track i { display: block; height: 86%; background: #c1c1c1; }

.editor { display: flex; flex-direction: column; width: 100%; max-width: 1002px; border: 1px solid #d0d0d0; border-bottom: 0; border-radius: 4px 4px 0 0; }
.tools { padding: 3px 0 3px 14px; background: linear-gradient(#f1f1f1, #e5e5e5); border-bottom: 1px solid #c8c8c8; border-radius: 4px 4px 0 0; box-shadow: 0 1px 3px #d0d0d0; }
.canvas { flex: 1; }
.row { display: flex; height: 24px; align-items: center; }
.row.center { justify-content: center; padding-right: 12px; }
.t { flex: none; display: flex; width: 24px; height: 22px; align-items: center; justify-content: center; color: #4c4c4c; }
.t > svg:first-child { width: 18px; height: 18px; }
.t .caret { width: 6px; height: 4px; }
.t.split { width: 34px; gap: 3px; }
.t.active { width: 22px; margin: 0 1px; background: #fbe0ad; border: 1px solid #dcb878; border-radius: 2px; }
.t.faded { opacity: .5; }
.sep { flex: none; width: 1px; height: 16px; margin: 0 4px; background: #c8c8c8; }
.sep.none { background: none; }
.html { color: #4b7ba8; font: 7px/12px "DejaVu Sans", sans-serif; }
.serif { font: 16px/20px "Liberation Serif", serif; }
.bold { font-weight: 700; }
.italic { font-style: italic; font-weight: 700; }
.under { text-decoration: underline; }
.boxed { width: 14px; height: 14px; border: 1px solid #777; line-height: 13px; }
.strike { font-size: 10px; text-decoration: line-through; }
.script { font: 700 14px/18px "Noto Sans", sans-serif; align-items: center; color: #555; }
.script sup, .script sub { font-size: 8px; line-height: 8px; color: #5d86c8; }
.script sup { align-self: flex-start; padding-top: 2px; }
.script sub { align-self: flex-end; padding-bottom: 2px; }
.t.split.serif > .caret { width: 6px; height: 4px; margin-left: 3px; }
.marker { font: 700 10px/12px "Noto Sans", sans-serif; background: #f8d38c; }
.t .pen { width: 6px; height: 12px; margin-left: -4px; }
.dotted { width: 14px; height: 14px; border: 1px dashed #8eadd8; font-size: 14px; line-height: 10px; }
.t.case { flex-direction: column; font: 13px/10px "Noto Sans", sans-serif; color: #222; }
.t.case > svg { width: 14px; height: 5px; }
.omega { color: #6680c8; font: 700 16px/20px "Liberation Serif", serif; }
.sigma { color: #333; font: 700 18px/20px "Liberation Serif", serif; }
.combo { flex: none; position: relative; width: 82px; height: 22px; margin-right: 1px; border: 1px solid #ccc; border-radius: 2px; color: #666; background: #eee; }
.combo select { width: 100%; height: 20px; padding: 0 10px 0 0; border: 0; background: none; appearance: none; text-align: center; text-align-last: center; color: #666; }
.combo::before { content: ""; position: absolute; right: 10px; top: 0; bottom: 0; border-left: 1px solid #ccc; }
.combo::after { content: ""; position: absolute; right: 2px; top: 9px; border: 3px solid transparent; border-top-color: #333; pointer-events: none; }

/* dialog */
.dialog {
  position: absolute; left: 307px; top: 136px; width: calc(50% + 1px); min-width: 600px;
  background: #fff; border: 1px solid #aaa; border-radius: 6px; box-shadow: 0 3px 6px #aaa;
}
.dialog-head { display: flex; align-items: center; justify-content: space-between; height: 29px; padding: 0 9px 0 6px; border-bottom: 1px solid #c6c6c6; border-radius: 6px 6px 0 0; background: linear-gradient(#fff, #ececec); }
.dialog-head h1 { margin: 0; padding-top: 1px; font-size: 12px; line-height: 16px; color: #000; }
.dialog-head svg { width: 17px; height: 17px; }
.dialog-body { padding: 9px 11px 19px; color: #666; }
.tabs { display: flex; gap: 4px; }
.tabs > button { width: 60px; height: 32px; padding-top: 2px; border: 1px solid #ccc; background: linear-gradient(#fff 50%, #f0f0f0); }
.tabs > .on { z-index: 1; margin-bottom: -1px; height: 33px; border-bottom: 0; background: #fff; }
.float { display: flex; align-items: center; gap: 6px; margin: 0 4px 4px auto; }
.float span { margin-right: -2px; padding-top: 2px; }
.float svg { width: 19px; height: 17px; }
.panel { position: relative; min-height: 348px; margin-top: -1px; padding: 0 10px; border: 1px solid #ccc; }
.status { display: flex; align-items: center; gap: 10px; height: 46px; border-bottom: 1px solid #ddd; font-size: 14px; }
.status p { flex: 1; margin: 0; }
.status button { width: 94px; height: 32px; border: 1px solid #ccc; border-radius: 3px; }
.status .start { background: #00b7ee; border-color: #00b7ee; color: #fff; }
.files { display: flex; gap: 8px; padding-top: 9px; }
.file, .drop { display: flex; align-items: center; justify-content: center; width: 113px; height: 113px; }
.file { background: #fefefe; }
.file svg { width: 40px; height: 30px; }
.drop { width: 115px; height: 115px; padding: 0 0 12px 6px; border: 1px solid #eee; }
.drop svg { width: 64px; height: 56px; }
.highlight { position: absolute; left: -1px; top: 37px; width: 291px; height: 171px; border: 2px solid #c9252b; pointer-events: none; }
.actions { display: flex; justify-content: flex-end; gap: 11px; margin-top: 11px; padding-right: 1px; }
.actions button { width: 95px; height: 24px; padding-top: 1px; border: 1px solid #ccc; border-radius: 5px; background: linear-gradient(#fff, #f3f3f3); color: #000; }
```
